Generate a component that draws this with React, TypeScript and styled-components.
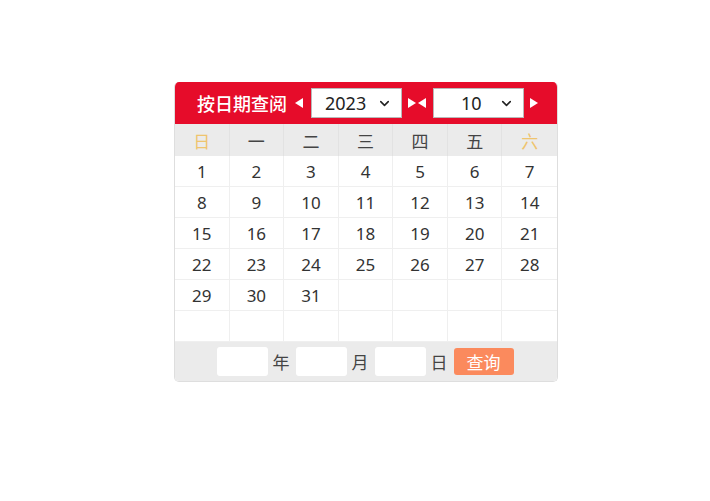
import styled, { createGlobalStyle } from "styled-components";
import { ChevronDown } from "lucide-react";

const GlobalStyle = createGlobalStyle`
  body {
    margin: 0;
    background: #ffffff;
    font-family: "Noto Sans", "Noto Sans CJK SC", sans-serif;
  }
`;

const Page = styled.div`
  padding: 82px 0 0 174px;
`;

const Calendar = styled.div`
  width: 382px;
  border: 1px solid #dedede;
  border-top: none;
  border-radius: 5px;
  overflow: hidden;
  background: #ffffff;
`;

const Header = styled.div`
  display: flex;
  align-items: center;
  height: 42px;
  background: #e60c2a;
  padding-left: 22px;
`;

const Title = styled.span`
  color: #ffffff;
  font-family: "Noto Sans CJK SC", sans-serif;
  font-size: 18px;
  font-weight: 500;
  margin-right: 8px;
`;

const Arrow = styled.span<{ $dir: "left" | "right" }>`
  width: 0;
  height: 0;
  border-top: 5.5px solid transparent;
  border-bottom: 5.5px solid transparent;
  ${(p) =>
    p.$dir === "left"
      ? "border-right: 8px solid #ffffff;"
      : "border-left: 8px solid #ffffff;"}
`;

const Bowtie = styled.span`
  display: flex;
  gap: 2px;
  margin: 0 7px 0 6px;
`;

const Spacer = styled.span<{ $w: number }>`
  width: ${(p) => p.$w}px;
`;

const SelectWrap = styled.div<{ $textPad: number }>`
  position: relative;
  width: 91px;
  height: 30px;
  select {
    width: 100%;
    height: 100%;
    appearance: none;
    border: 1px solid #b9b9b9;
    background: #ffffff;
    font-family: "Noto Sans", sans-serif;
    font-size: 18px;
    color: #222;
    padding-left: ${(p) => p.$textPad}px;
    outline: none;
  }
  svg {
    position: absolute;
    right: 10px;
    top: 8px;
    pointer-events: none;
  }
`;

const Grid = styled.div`
  display: grid;
  grid-template-columns: repeat(7, 1fr);
`;

const WeekCell = styled.div<{ $weekend?: boolean }>`
  height: 32px;
  display: flex;
  align-items: center;
  justify-content: center;
  background: #ebebeb;
  font-family: "Noto Sans CJK SC", sans-serif;
  font-size: 17px;
  color: ${(p) => (p.$weekend ? "#efc46e" : "#444")};
  border-right: 1px solid #e2e2e2;
  &:nth-child(7n) {
    border-right: none;
  }
`;

const DayCell = styled.div`
  height: 30px;
  display: flex;
  align-items: center;
  justify-content: center;
  font-size: 17px;
  color: #333;
  border-right: 1px solid #efefef;
  border-bottom: 1px solid #efefef;
  &:nth-child(7n) {
    border-right: none;
  }
`;

const Footer = styled.div`
  display: flex;
  align-items: center;
  justify-content: center;
  height: 39px;
  background: #ebebeb;
  gap: 5px;
  padding-right: 2px;
`;

const DateInput = styled.input`
  width: 51px;
  height: 29px;
  box-sizing: border-box;
  border: none;
  border-radius: 3px;
  background: #ffffff;
  outline: none;
`;

const Unit = styled.span`
  font-family: "Noto Sans CJK SC", sans-serif;
  font-size: 17px;
  color: #444;
  margin-right: 1px;
`;

const SearchButton = styled.button`
  width: 60px;
  height: 27px;
  border: none;
  border-radius: 3px;
  background: #fb8a5d;
  color: #ffffff;
  font-family: "Noto Sans CJK SC", sans-serif;
  font-size: 17px;
  padding: 0;
  line-height: 27px;
`;

const weekdays = ["日", "一", "二", "三", "四", "五", "六"];

export default function App() {
  const days: (number | null)[] = [];
  for (let i = 1; i <= 31; i++) days.push(i);
  while (days.length < 42) days.push(null);

  return (
    <>
      <GlobalStyle />
      <Page>
        <Calendar>
          <Header>
            <Title>按日期查阅</Title>
            <Arrow $dir="left" />
            <Spacer $w={8} />
            <SelectWrap $textPad={13}>
              <select defaultValue="2023">
                <option>2023</option>
              </select>
              <ChevronDown size={15} strokeWidth={2.5} color="#222" />
            </SelectWrap>
            <Bowtie>
              <Arrow $dir="right" />
              <Arrow $dir="left" />
            </Bowtie>
            <SelectWrap $textPad={27}>
              <select defaultValue="10">
                <option>10</option>
              </select>
              <ChevronDown size={15} strokeWidth={2.5} color="#222" />
            </SelectWrap>
            <Spacer $w={6} />
            <Arrow $dir="right" />
          </Header>
          <Grid>
            {weekdays.map((w, i) => (
              <WeekCell key={w} $weekend={i === 0 || i === 6}>
                {w}
              </WeekCell>
            ))}
          </Grid>
          <Grid>
            {days.map((d, i) => (
              <DayCell key={i}>{d ?? ""}</DayCell>
            ))}
          </Grid>
          <Footer>
            <DateInput />
            <Unit>年</Unit>
            <DateInput />
            <Unit>月</Unit>
            <DateInput />
            <Unit>日</Unit>
            <SearchButton>查询</SearchButton>
          </Footer>
        </Calendar>
      </Page>
    </>
  );
}
